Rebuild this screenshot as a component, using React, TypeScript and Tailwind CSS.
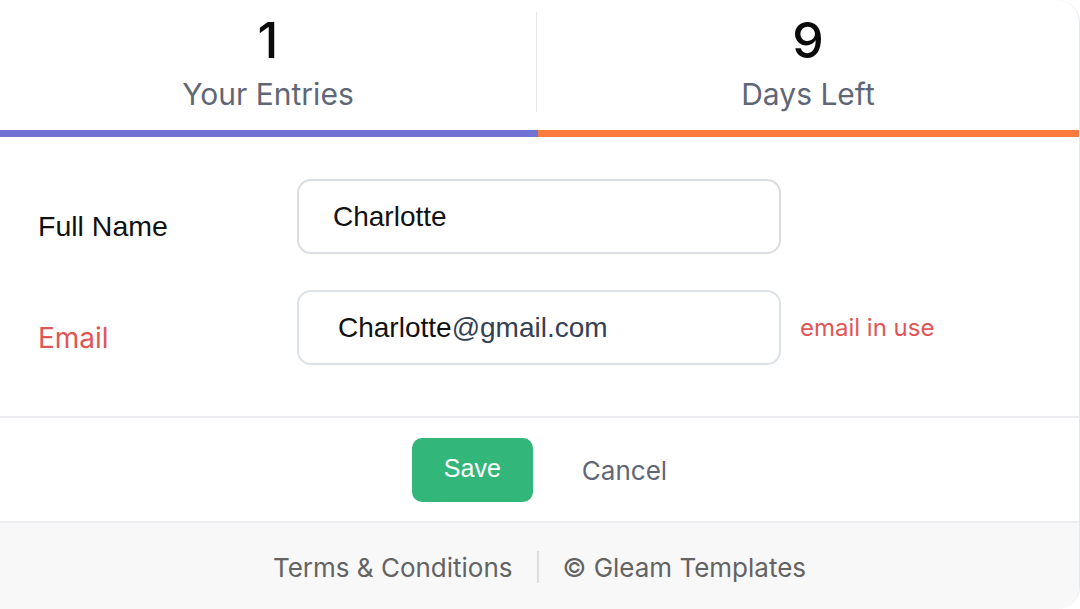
import React from 'react';

const inter = { fontFamily: 'Inter, "Noto Sans", sans-serif' };
const helv = { fontFamily: '"Liberation Sans", Arial, sans-serif' };

const App: React.FC = () => {
  return (
    <div className="w-[1080px] h-[609px] bg-white overflow-hidden">
      <div className="h-full flex flex-col bg-white rounded-r-[22px] border-r border-[#e6e8eb] overflow-hidden" style={inter}>
        {/* Stats */}
        <div className="flex h-[130px] pt-[12px] pb-[18px]">
          <div className="w-[537px] flex flex-col items-center border-r border-[#e5e7eb]">
            <span className="text-[50px] leading-[56px] font-medium text-[#0b0b0b]">1</span>
            <span className="mt-[6px] text-[30px] leading-[40px] text-[#5f6777]">Your Entries</span>
          </div>
          <div className="flex-1 flex flex-col items-center">
            <span className="text-[50px] leading-[56px] font-medium text-[#0b0b0b]">9</span>
            <span className="mt-[6px] text-[30px] leading-[40px] text-[#5f6777]">Days Left</span>
          </div>
        </div>
        <div className="flex h-[7px]">
          <div className="w-[538px] bg-[#7170d3]"></div>
          <div className="flex-1 bg-[#fb7b3e]"></div>
        </div>

        {/* Form */}
        <div className="flex flex-col gap-[36px] pt-[42px] pb-[51px] pl-[38px] border-b-2 border-[#ebedf0]">
          <div className="flex items-center">
            <label className="w-[259px] pt-[20px] text-[28.5px] text-[#111]" style={helv}>Full Name</label>
            <div className="w-[484px] h-[75px] border-2 border-[#dadde2] rounded-[14px] flex items-center pl-[34px] text-[28px] text-[#111]" style={helv}>
              Charlotte
            </div>
          </div>
          <div className="flex items-center">
            <label className="w-[259px] pt-[20px] text-[28px] text-[#e05656]">Email</label>
            <div className="w-[484px] h-[75px] border-2 border-[#dde2e8] rounded-[14px] flex items-center pl-[39px] text-[28px] text-[#111]" style={helv}>
              Charlotte<span className="text-[#344155]">@gmail.com</span>
            </div>
            <span className="ml-[19px] text-[24px] text-[#e05656]">email in use</span>
          </div>
        </div>

        {/* Actions */}
        <div className="flex items-center justify-center gap-[49px] h-[105px] border-b-2 border-[#ebedf0]">
          <button className="w-[121px] h-[64px] bg-[#33b67a] rounded-[10px] text-white text-[25px] pb-[2px]" style={helv}>Save</button>
          <button className="text-[26px] text-[#5f6777] pt-[2px]">Cancel</button>
        </div>

        {/* Footer */}
        <div className="flex-1 bg-[#f8f8f9] flex items-center justify-center pt-[2px]">
          <span className="text-[26px] text-[#636363]">Terms &amp; Conditions</span>
          <span className="mx-[24px] w-[2px] h-[32px] bg-[#dedede]"></span>
          <span className="text-[26px] text-[#636363]">© Gleam Templates</span>
        </div>
      </div>
    </div>
  );
};

export default App;
